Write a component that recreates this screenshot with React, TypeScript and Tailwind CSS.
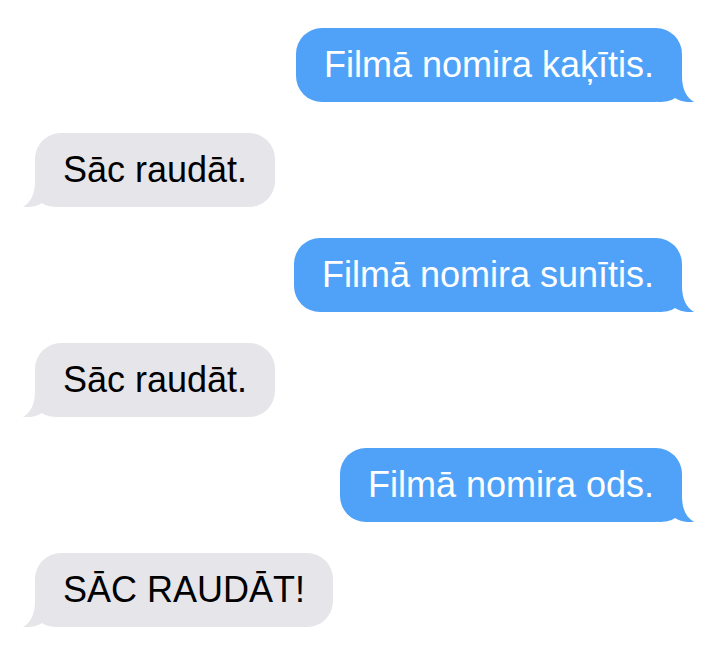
const messages = [
  { from: 'me', text: 'Filmā nomira kaķītis.' },
  { from: 'them', text: 'Sāc raudāt.' },
  { from: 'me', text: 'Filmā nomira sunītis.' },
  { from: 'them', text: 'Sāc raudāt.' },
  { from: 'me', text: 'Filmā nomira ods.' },
  { from: 'them', text: 'SĀC RAUDĀT!' },
]

function Tail({ side, color }: { side: 'left' | 'right'; color: string }) {
  return (
    <svg
      viewBox="-12 0 36 26"
      width="36"
      height="26"
      className={side === 'right' ? 'absolute right-[-12px] bottom-0' : 'absolute left-[-12px] bottom-0 scale-x-[-1]'}
      fill={color}
    >
      <path d="M-12 0 L12 0 C12 13 16 21 24 26 C17 26.5 10 25.5 5 22 C1 25 -5 26 -12 26 Z" />
    </svg>
  )
}

export default function App() {
  return (
    <div className="min-h-[660px] w-[718px] bg-white px-[36px] pt-[28px] font-['Liberation_Sans',Arial,sans-serif]">
      <div className="flex flex-col gap-[31px]">
        {messages.map((m, i) => {
          const mine = m.from === 'me'
          return (
            <div key={i} className={mine ? 'flex justify-end' : 'flex justify-start'}>
              <div
                className={
                  mine
                    ? 'relative flex h-[74px] items-center rounded-[26px] bg-[#4fa2f8] px-[28px] text-[36px] text-white'
                    : 'relative -ml-px flex h-[74px] items-center rounded-[26px] bg-[#e5e5ea] px-[28px] text-[36px] text-black'
                }
              >
                <Tail side={mine ? 'right' : 'left'} color={mine ? '#4fa2f8' : '#e5e5ea'} />
                <span className="relative">{m.text}</span>
              </div>
            </div>
          )
        })}
      </div>
    </div>
  )
}
